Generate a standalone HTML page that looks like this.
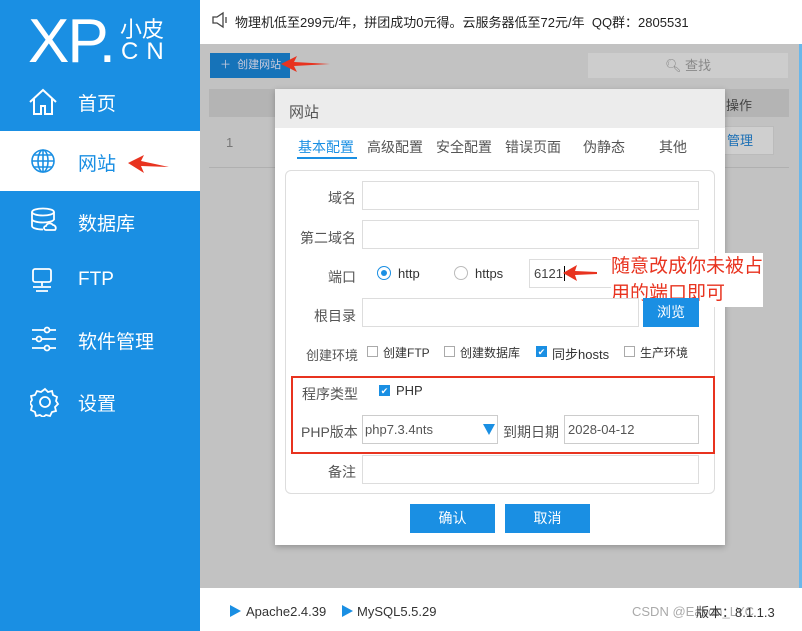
<!DOCTYPE html>
<html><head><meta charset="utf-8"><style>
*{margin:0;padding:0;box-sizing:border-box}
body{width:802px;height:631px;position:relative;overflow:hidden;font-family:"Liberation Sans","Noto Sans CJK SC",sans-serif;background:#c2c2c2}
.a{position:absolute}
.side{left:0;top:0;width:200px;height:631px;background:#1a8fe3;color:#fff}
.nav{font-size:19px;left:78px}
.inp{position:absolute;background:#fff;border:1px solid #ddd}
.lbl{position:absolute;font-size:14px;color:#555;text-align:right}
.btn{position:absolute;background:#1a8fe3;color:#fff;font-size:14px;text-align:center}
.cb{position:absolute;width:11px;height:11px;border:1px solid #aaa;background:#fff}
.cbc{background:#1a8fe3;border-color:#1a8fe3;color:#fff;font-size:9px;line-height:10px;text-align:center}
.s13{font-size:13px;color:#333}
</style></head><body>
<div class="a side">
 <div class="a" style="left:28px;top:10px;font-size:62px;line-height:64px;letter-spacing:-2px">XP.</div>
 <div class="a" style="left:120px;top:12px;font-size:22px">小皮</div>
 <div class="a" style="left:121px;top:38px;font-size:24px;letter-spacing:8px">CN</div>
 <svg class="a" style="left:28px;top:88px" width="30" height="28" viewBox="0 0 30 28" fill="none" stroke="#fff" stroke-width="2"><path d="M2 14L15 2l13 12M6 11v15h7v-8h4v8h7V11"/></svg>
 <div class="a nav" style="top:89px">首页</div>
 <div class="a" style="left:0;top:131px;width:200px;height:60px;background:#fff"></div>
 <svg class="a" style="left:30px;top:148px" width="26" height="26" viewBox="0 0 26 26" fill="none" stroke="#1a8fe3" stroke-width="1.6"><circle cx="13" cy="13" r="11"/><ellipse cx="13" cy="13" rx="5" ry="11"/><path d="M2 13h22M4 7h18M4 19h18M13 2v22"/></svg>
 <div class="a nav" style="top:149px;color:#1a8fe3">网站</div>
 <svg class="a" style="left:128px;top:155px" width="42" height="18"><path d="M0 8L16 0l-3 6 28 6-28-1 3 7z" fill="#e8331f"/></svg>
 <svg class="a" style="left:30px;top:207px" width="28" height="28" fill="none" stroke="#fff" stroke-width="1.8"><ellipse cx="13" cy="5" rx="11" ry="3.5"/><path d="M2 5v14c0 2 5 3.5 11 3.5M24 5v8M2 12c0 2 5 3.5 11 3.5s11-1.5 11-3.5"/><path d="M16 23h9a3 3 0 0 0-2-5 4 4 0 0 0-7 1 2 2 0 0 0 0 4z"/></svg>
 <div class="a nav" style="top:209px">数据库</div>
 <svg class="a" style="left:30px;top:267px" width="28" height="28" fill="none" stroke="#fff" stroke-width="1.8"><rect x="3" y="2" width="18" height="13" rx="2"/><path d="M12 15v4M3 20h18M6 24h12"/></svg>
 <div class="a nav" style="top:269px">FTP</div>
 <svg class="a" style="left:30px;top:325px" width="28" height="28" fill="none" stroke="#fff" stroke-width="1.8"><path d="M2 5h24M2 14h24M2 23h24"/><circle cx="17" cy="5" r="2.5" fill="#1a8fe3"/><circle cx="9" cy="14" r="2.5" fill="#1a8fe3"/><circle cx="17" cy="23" r="2.5" fill="#1a8fe3"/></svg>
 <div class="a nav" style="top:327px">软件管理</div>
 <svg class="a" style="left:30px;top:387px" width="30" height="30" fill="none" stroke="#fff" stroke-width="1.8"><path d="M15 2l3 3 4-1 1 4 4 2-1 4 2 3-3 3 1 4-4 1-2 4-4-1-3 2-3-2-4 1-1-4-4-2 1-4-2-3 2-3-1-4 4-1 2-4 4 1z"/><circle cx="15" cy="15" r="5"/></svg>
 <div class="a nav" style="top:389px">设置</div>
</div>
<div class="a" style="left:200px;top:0;width:602px;height:44px;background:#fff"></div>
<svg class="a" style="left:211px;top:11px" width="18" height="18" fill="none" stroke="#444" stroke-width="1.3"><path d="M2 6h4l6-4v14l-6-4H2z"/><path d="M15 6v6"/></svg>
<div class="a" style="left:235px;top:12px;font-size:13px;color:#222">物理机低至299元/年，拼团成功0元得。云服务器低至72元/年&nbsp;&nbsp;QQ群：2805531</div>
<div class="a" style="left:210px;top:53px;width:80px;height:25px;background:#1673b9;color:#ccd;font-size:11px;line-height:25px;padding-left:10px">＋&nbsp;&nbsp;创建网站</div>
<svg class="a" style="left:281px;top:56px" width="50" height="16"><path d="M0 8L16 0l-3 6 36 2-36 2 3 6z" fill="#e8331f"/></svg>
<div class="a" style="left:588px;top:53px;width:200px;height:25px;background:#cdcdcd;color:#888;font-size:13px;line-height:25px;text-align:center">🔍︎ 查找</div>
<div class="a" style="left:209px;top:89px;width:580px;height:28px;background:#b4b4b4"></div>
<div class="a" style="left:726px;top:95px;font-size:13px;color:#444">操作</div>
<div class="a" style="left:209px;top:167px;width:580px;height:1px;background:#b0b0b0"></div>
<div class="a" style="left:226px;top:135px;font-size:13px;color:#777">1</div>
<div class="a" style="left:702px;top:126px;width:72px;height:29px;background:#cfcfcf;border:1px solid #bbb;color:#1a6fb5;font-size:13px;line-height:27px;padding-left:24px">管理</div>
<div class="a" style="left:799px;top:44px;width:3px;height:544px;background:#6ab7ea"></div>
<div class="a" style="left:275px;top:89px;width:450px;height:456px;background:#fff;box-shadow:0 2px 6px rgba(0,0,0,.25)">
 <div class="a" style="left:0;top:0;width:450px;height:39px;background:#ececec"></div>
 <div class="a" style="left:14px;top:12px;font-size:15px;color:#555">网站</div>
</div>
<div class="a" style="left:298px;top:137px;font-size:14px;color:#1a8fe3">基本配置</div>
<div class="a" style="left:297px;top:157px;width:60px;height:2px;background:#1a8fe3"></div>
<div class="a" style="left:367px;top:137px;font-size:14px;color:#555">高级配置</div>
<div class="a" style="left:436px;top:137px;font-size:14px;color:#555">安全配置</div>
<div class="a" style="left:505px;top:137px;font-size:14px;color:#555">错误页面</div>
<div class="a" style="left:583px;top:137px;font-size:14px;color:#555">伪静态</div>
<div class="a" style="left:659px;top:137px;font-size:14px;color:#555">其他</div>
<div class="a" style="left:285px;top:170px;width:430px;height:324px;border:1px solid #ddd;border-radius:6px"></div>
<div class="lbl" style="left:290px;top:188px;width:66px">域名</div>
<div class="inp" style="left:362px;top:181px;width:337px;height:29px"></div>
<div class="lbl" style="left:290px;top:228px;width:66px">第二域名</div>
<div class="inp" style="left:362px;top:220px;width:337px;height:29px"></div>
<div class="lbl" style="left:290px;top:267px;width:66px">端口</div>
<div class="a" style="left:377px;top:266px;width:14px;height:14px;border:1px solid #1a8fe3;border-radius:50%"><div class="a" style="left:3px;top:3px;width:6px;height:6px;border-radius:50%;background:#1a8fe3"></div></div>
<div class="a s13" style="left:398px;top:266px">http</div>
<div class="a" style="left:454px;top:266px;width:14px;height:14px;border:1px solid #bbb;border-radius:50%"></div>
<div class="a s13" style="left:475px;top:266px">https</div>
<div class="inp" style="left:529px;top:259px;width:170px;height:29px;font-size:13px;color:#444;padding:6px 0 0 4px">6121<span style="border-left:1px solid #000;margin-left:1px"></span></div>
<svg class="a" style="left:563px;top:265px" width="34" height="16"><path d="M0 8L14 0l-2 6 22 1v2l-22 1 2 6z" fill="#e8331f"/></svg>
<div class="a" style="left:611px;top:253px;font-size:19px;color:#e8331f;line-height:27px;background:#fff;white-space:nowrap">随意改成你未被占<br>用的端口即可</div>
<div class="lbl" style="left:290px;top:306px;width:66px">根目录</div>
<div class="inp" style="left:362px;top:298px;width:277px;height:29px"></div>
<div class="btn" style="left:643px;top:298px;width:56px;height:29px;line-height:29px">浏览</div>
<div class="lbl" style="left:298px;top:345px;width:60px;font-size:13px">创建环境</div>
<div class="cb" style="left:367px;top:346px"></div><div class="a s13" style="left:383px;top:344px;font-size:12px">创建FTP</div>
<div class="cb" style="left:444px;top:346px"></div><div class="a s13" style="left:460px;top:344px;font-size:12px">创建数据库</div>
<div class="cb cbc" style="left:536px;top:346px">✔</div><div class="a s13" style="left:552px;top:344px;font-size:13px">同步hosts</div>
<div class="cb" style="left:624px;top:346px"></div><div class="a s13" style="left:640px;top:344px;font-size:12px">生产环境</div>
<div class="a" style="left:291px;top:376px;width:424px;height:78px;border:2px solid #e8331f"></div>
<div class="lbl" style="left:302px;top:384px;font-size:14px">程序类型</div>
<div class="cb cbc" style="left:379px;top:385px">✔</div><div class="a s13" style="left:396px;top:383px">PHP</div>
<div class="lbl" style="left:301px;top:422px;font-size:14px">PHP版本</div>
<div class="inp" style="left:362px;top:415px;width:136px;height:29px;font-size:13px;color:#555;padding:6px 0 0 2px;border-color:#ccc">php7.3.4nts</div>
<div class="a" style="left:483px;top:424px;width:0;height:0;border-left:6px solid transparent;border-right:6px solid transparent;border-top:11px solid #1a8fe3"></div>
<div class="lbl" style="left:503px;top:422px;font-size:14px">到期日期</div>
<div class="inp" style="left:564px;top:415px;width:135px;height:29px;font-size:13px;color:#555;padding:6px 0 0 3px;border-color:#ccc">2028-04-12</div>
<div class="lbl" style="left:290px;top:462px;width:66px">备注</div>
<div class="inp" style="left:362px;top:455px;width:337px;height:29px"></div>
<div class="btn" style="left:410px;top:504px;width:85px;height:29px;line-height:29px">确认</div>
<div class="btn" style="left:505px;top:504px;width:85px;height:29px;line-height:29px">取消</div>
<div class="a" style="left:200px;top:588px;width:602px;height:43px;background:#fff"></div>
<div class="a" style="left:230px;top:605px;width:0;height:0;border-top:6px solid transparent;border-bottom:6px solid transparent;border-left:11px solid #1a8fe3"></div>
<div class="a s13" style="left:246px;top:604px">Apache2.4.39</div>
<div class="a" style="left:342px;top:605px;width:0;height:0;border-top:6px solid transparent;border-bottom:6px solid transparent;border-left:11px solid #1a8fe3"></div>
<div class="a s13" style="left:357px;top:604px">MySQL5.5.29</div>
<div class="a" style="left:632px;top:604px;font-size:13px;color:#aaa">CSDN @Eason_LYC</div>
<div class="a s13" style="left:696px;top:602px">版本：8.1.1.3</div>
</body></html>
